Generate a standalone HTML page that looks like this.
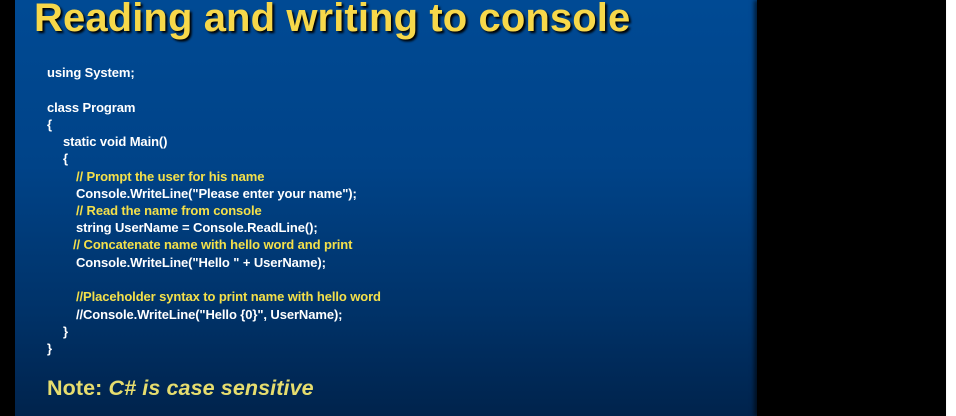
<!DOCTYPE html>
<html><head><style>
body{margin:0;width:956px;height:416px;background:#fff;position:relative;overflow:hidden;font-family:"Liberation Sans",Arial,sans-serif}
#l{position:absolute;left:0;top:0;width:15px;height:416px;background:#000}
#s{position:absolute;left:15px;top:0;width:742px;height:416px;background:linear-gradient(#004a94 0%,#004388 40%,#003268 75%,#00234c 100%)}
#r{position:absolute;left:757px;top:0;width:189px;height:416px;background:#000;box-shadow:-3px 0 4px rgba(0,0,0,.6)}
h1{position:absolute;left:34px;top:-4px;margin:0;font-size:40px;font-weight:bold;color:#f7d84a;text-shadow:2px 2px 2px #000;white-space:nowrap;letter-spacing:0.1px}
.c{position:absolute;font-size:13px;font-weight:bold;color:#fff;white-space:pre;letter-spacing:-0.1px;line-height:17px}
.y{color:#f4e04a}
#n{position:absolute;left:47px;top:376px;font-size:21.5px;font-weight:bold;color:#e6dd6e;white-space:nowrap;letter-spacing:0.1px}
</style></head><body>
<div id="l"></div><div id="s"></div><div id="r"></div>
<h1>Reading and writing to console</h1>
<div class="c" style="left:47px;top:64px">using System;</div>
<div class="c" style="left:47px;top:99px">class Program</div>
<div class="c" style="left:47px;top:116px">{</div>
<div class="c" style="left:63px;top:133px">static void Main()</div>
<div class="c" style="left:63px;top:150px">{</div>
<div class="c y" style="left:76px;top:168px">// Prompt the user for his name</div>
<div class="c" style="left:76px;top:185px">Console.WriteLine("Please enter your name");</div>
<div class="c y" style="left:76px;top:202px">// Read the name from console</div>
<div class="c" style="left:76px;top:219px">string UserName = Console.ReadLine();</div>
<div class="c y" style="left:73px;top:236px">// Concatenate name with hello word and print</div>
<div class="c" style="left:76px;top:254px">Console.WriteLine("Hello " + UserName);</div>
<div class="c y" style="left:76px;top:288px">//Placeholder syntax to print name with hello word</div>
<div class="c" style="left:76px;top:306px">//Console.WriteLine("Hello {0}", UserName);</div>
<div class="c" style="left:63px;top:323px">}</div>
<div class="c" style="left:47px;top:340px">}</div>
<div id="n">Note: <i>C# is case sensitive</i></div>
</body></html>
